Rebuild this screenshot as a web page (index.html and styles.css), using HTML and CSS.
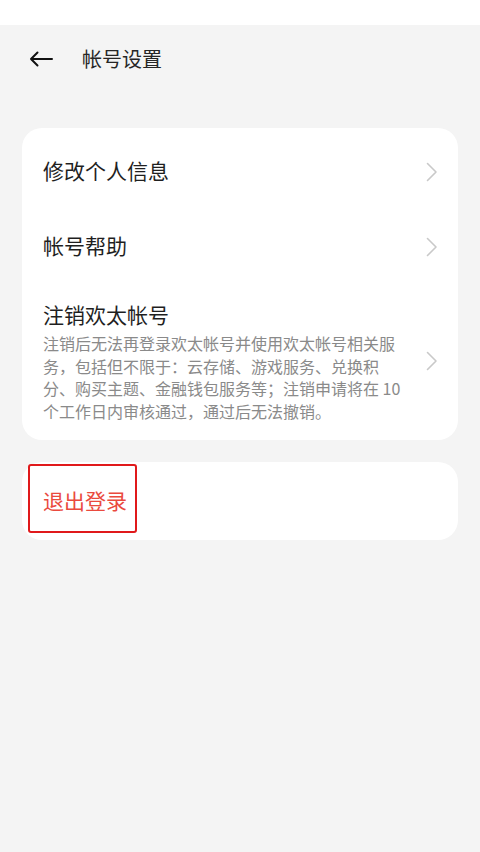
FILE: index.html
```html
<!DOCTYPE html>
<html lang="zh-CN">
<head>
<meta charset="utf-8">
<title>帐号设置</title>
<link rel="stylesheet" href="styles.css">
</head>
<body>
<div class="statusbar"></div>
<header class="header">
  <svg class="back" width="24" height="16" viewBox="0 0 24 16">
    <path d="M23 8H2M8.5 1.5L2 8l6.5 6.5" fill="none" stroke="#111" stroke-width="2" stroke-linecap="round" stroke-linejoin="round"/>
  </svg>
  <h1 class="title">帐号设置</h1>
</header>

<section class="card list">
  <div class="row">
    <div class="row-main"><div class="row-title">修改个人信息</div></div>
    <svg class="chev chev-low" width="12" height="20" viewBox="0 0 12 20"><path d="M1.5 1.5L10 10l-8.5 8.5" fill="none" stroke="#c9c9c9" stroke-width="1.6" stroke-linecap="round" stroke-linejoin="round"/></svg>
  </div>
  <div class="row">
    <div class="row-main"><div class="row-title">帐号帮助</div></div>
    <svg class="chev chev-low" width="12" height="20" viewBox="0 0 12 20"><path d="M1.5 1.5L10 10l-8.5 8.5" fill="none" stroke="#c9c9c9" stroke-width="1.6" stroke-linecap="round" stroke-linejoin="round"/></svg>
  </div>
  <div class="row row-tall">
    <div class="row-main">
      <div class="row-title">注销欢太帐号</div>
      <p class="row-desc">注销后无法再登录欢太帐号并使用欢太帐号相关服务，包括但不限于：云存储、游戏服务、兑换积分、购买主题、金融钱包服务等；注销申请将在 10 个工作日内审核通过，通过后无法撤销。</p>
    </div>
    <svg class="chev" width="12" height="20" viewBox="0 0 12 20"><path d="M1.5 1.5L10 10l-8.5 8.5" fill="none" stroke="#c9c9c9" stroke-width="1.6" stroke-linecap="round" stroke-linejoin="round"/></svg>
  </div>
</section>

<section class="card logout">
  <div class="logout-text">退出登录</div>
  <div class="highlight"></div>
</section>
</body>
</html>
```

FILE: styles.css
```css
html, body {
  margin: 0;
  padding: 0;
}
body {
  background: #f4f4f4;
  font-family: "Noto Sans CJK SC", "Noto Sans", sans-serif;
  color: #222;
  min-height: 852px;
}
.statusbar {
  height: 25px;
  background: #ffffff;
}
.header {
  height: 68px;
  display: flex;
  align-items: center;
  padding-left: 29px;
  box-sizing: border-box;
}
.back {
  display: block;
  flex: none;
}
.title {
  margin: 0 0 0 29px;
  font-size: 20px;
  font-weight: 400;
  color: #262626;
  line-height: 28px;
}
.card {
  background: #ffffff;
  border-radius: 20px;
  margin: 0 22px;
}
.list {
  margin-top: 35px;
  padding: 4px 20px 0 21px;
}
.row {
  display: flex;
  align-items: center;
  min-height: 75px;
}
.row-tall {
  padding: 17px 0 18px;
}
.row-main {
  flex: 1;
  min-width: 0;
  padding-right: 22px;
}
.row-title {
  font-size: 21px;
  line-height: 30px;
  color: #1f1f1f;
}
.row-desc {
  margin: 3px 0 0;
  font-size: 16px;
  line-height: 22.5px;
  color: #8a8a8a;
}
.chev {
  flex: none;
  display: block;
}
.chev-low {
  margin-top: 5px;
}
.logout {
  margin-top: 22px;
  height: 78px;
  display: flex;
  align-items: center;
  padding-left: 21px;
  position: relative;
}
.logout-text {
  font-size: 21px;
  line-height: 30px;
  color: #ea4a3e;
  margin-top: -3px;
}
.highlight {
  position: absolute;
  left: 6px;
  top: 2px;
  width: 109px;
  height: 69px;
  box-sizing: border-box;
  border: 2px solid #e0191b;
  border-radius: 3px;
}
```
